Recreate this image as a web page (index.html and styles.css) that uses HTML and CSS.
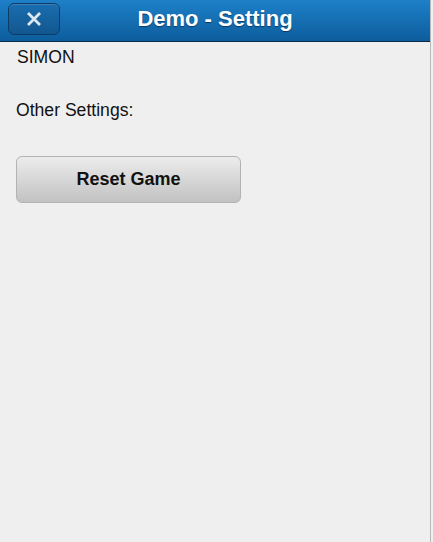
FILE: index.html
```html
<!DOCTYPE html>
<html>
<head>
<meta charset="utf-8">
<link rel="stylesheet" href="styles.css">
</head>
<body>
<div class="page">
  <header class="header">
    <button class="close-btn" aria-label="Close">
      <svg width="16" height="16" viewBox="0 0 16 16"><path d="M2 2 L14 14 M14 2 L2 14" stroke="#dfe7ee" stroke-width="2.8"/></svg>
    </button>
    <h1 class="title">Demo - Setting</h1>
  </header>
  <main class="content">
    <p class="name">SIMON</p>
    <p class="label">Other Settings:</p>
    <button class="reset-btn">Reset Game</button>
  </main>
</div>
</body>
</html>
```
FILE: styles.css
```css
html, body {
  margin: 0;
  padding: 0;
  height: 100%;
}
body {
  background: #efefef;
  font-family: "Liberation Sans", Arial, sans-serif;
  color: #111;
}
.page {
  min-height: 100%;
  width: 430px;
  border-right: 1px solid #b8b8b8;
  box-sizing: content-box;
}
.header {
  position: relative;
  height: 41px;
  background: linear-gradient(#1d80c8, #0d5d9c);
  border-bottom: 1px solid #0a2a4a;
  display: flex;
  align-items: center;
  justify-content: center;
}
.close-btn {
  position: absolute;
  left: 8px;
  top: 3px;
  width: 52px;
  height: 32px;
  border: 1px solid #0d3c66;
  border-radius: 6px;
  background: linear-gradient(#1a6db0, #11578f);
  box-shadow: inset 0 1px 0 rgba(255,255,255,0.15);
  display: flex;
  align-items: center;
  justify-content: center;
  padding: 0;
}
.title {
  margin: 0;
  font-size: 22px;
  font-weight: bold;
  color: #fff;
  text-shadow: 0 1px 1px #0a3a66;
  margin-top: -4px;
}
.content {
  padding: 0 16px;
}
.name {
  margin: 4px 0 0 1px;
  font-size: 17.6px;
  line-height: 22px;
}
.label {
  margin: 31px 0 0 0;
  font-size: 17.6px;
  line-height: 22px;
}
.reset-btn {
  display: block;
  margin-top: 35px;
  width: 225px;
  height: 47px;
  border: 1px solid #b3b3b3;
  border-radius: 6px;
  background: linear-gradient(#ececec, #c2c2c2);
  font-family: "Liberation Sans", Arial, sans-serif;
  font-size: 18px;
  font-weight: bold;
  color: #111;
  padding: 0;
}
```
